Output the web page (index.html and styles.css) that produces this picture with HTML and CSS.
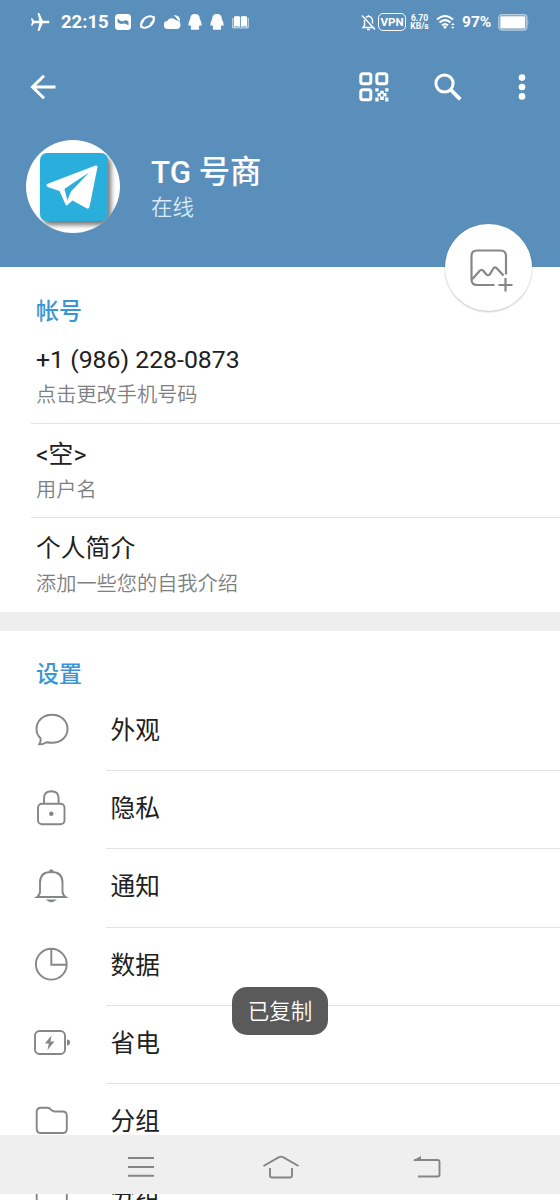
FILE: index.html
```html
<!DOCTYPE html>
<html lang="zh-CN">
  <head>
    <meta charset="UTF-8" />
    <meta name="viewport" content="width=device-width, initial-scale=1.0" />
    <title>TG 号商</title>
    <link rel="stylesheet" href="styles.css">
  </head>
  <body>
    <div class="screen">
      <header class="header">
        <div class="statusbar">
          <svg class="plane" width="20" height="20" viewBox="0 0 20 20"><path d="M19 8.8H12.8L9.3 1H7.6L9.4 8.8H4L2.3 6.3H1L2 10L1 13.7H2.3L4 11.2H9.4L7.6 19H9.3L12.8 11.2H19Q20 10 19 8.8Z" fill="#fff"/></svg>
          <span class="time">22:15</span>
          <div class="notices">
            <svg width="16" height="16" viewBox="0 0 16 16"><rect width="16" height="16" rx="3.5" fill="#fff"/><path d="M2.5 4.5Q6 8 8.5 7Q11 5.5 13.5 7.5V11.5Q10 8.5 7.5 9.8Q4.5 10.5 2.5 8Z" fill="#5a8fbb"/></svg>
            <svg width="17" height="16" viewBox="0 0 17 16"><ellipse cx="8.5" cy="8" rx="7.4" ry="4.6" transform="rotate(-38 8.5 8)" fill="none" stroke="#fff" stroke-width="2"/><path d="M2 14Q1.5 10.5 5 6.5M15 2Q15.5 6 11 10.500" fill="none" stroke="#fff" stroke-width="1.3"/></svg>
            <svg width="17" height="16" viewBox="0 0 17 16"><path d="M4 15A4 4 0 0 1 3.4 7A5 5 0 0 1 12 6.3A4.4 4.4 0 0 1 13 15Z" fill="#fff"/><path d="M9.5 1.5A5 5 0 0 1 15.8 8Q15 6 13.2 5.2Q12 2.5 9.5 1.5Z" fill="#fff"/></svg>
            <svg width="14" height="16" viewBox="0 0 14 16"><path d="M7 0Q2.2 0 2.2 5Q0 8.5 .3 11.5Q1.2 12 2 10.8Q2.5 12.3 3.3 13.2Q1.7 15.5 4 15.8H10Q12.3 15.5 10.7 13.2Q11.5 12.3 12 10.8Q12.8 12 13.7 11.5Q14 8.5 11.8 5Q11.8 0 7 0Z" fill="#fff"/></svg>
            <svg width="14" height="16" viewBox="0 0 14 16"><path d="M7 0Q2.2 0 2.2 5Q0 8.5 .3 11.5Q1.2 12 2 10.8Q2.5 12.3 3.3 13.2Q1.7 15.5 4 15.8H10Q12.3 15.5 10.7 13.2Q11.5 12.3 12 10.8Q12.8 12 13.7 11.5Q14 8.5 11.8 5Q11.8 0 7 0Z" fill="#fff"/></svg>
            <svg width="17" height="16" viewBox="0 0 17 16"><path d="M2 2.5Q6 1.2 8.1 2.8V13Q5 11.8 2 12.8ZM15 2.5Q11 1.2 8.9 2.8V13Q12 11.8 15 12.8Z" fill="#fff"/><path d="M.8 4V13.8H7.5L8.5 14.3L9.5 13.8H16.2V4" fill="none" stroke="#fff" stroke-width=".8"/></svg>
          </div>
          <div class="system">
            <svg class="mute" width="15" height="17" viewBox="0 0 15 17"><path d="M3.5 6V11.5L2 13.5H13.2M4.8 3.6Q7.5 1.2 10.2 3.5Q11.5 4.8 11.5 7V9.5M7.5 1V2.5M6 15.5H9M1 1.5L14 15.5" fill="none" stroke="#fff" stroke-width="1.4"/></svg>
            <span class="vpn">VPN</span>
            <span class="speed"><b>6.70</b><b>KB/s</b></span>
            <svg class="wifi" width="20" height="16" viewBox="0 0 20 16"><path d="M1 5.5Q9 -1.5 17 5.5M3.5 8.5Q9 3.7 14.5 8.5M6 11.3Q9 8.8 12 11.3" fill="none" stroke="#fff" stroke-width="2.1"/><path d="M6.8 12.8Q9 11.2 11.2 12.8L9 15Z" fill="#fff"/><path d="M15 11L16.8 9L18.6 11ZM15 12.7L16.8 14.7L18.6 12.7Z" fill="#fff"/></svg>
            <span class="percent">97%</span>
            <svg class="power" width="31" height="17" viewBox="0 0 31 17"><rect x=".8" y=".8" width="28" height="15.2" rx="3" fill="none" stroke="#b3cce0" stroke-width="1.4"/><rect x="2.3" y="2.3" width="25" height="12.2" rx="1" fill="#fff"/><path d="M29.5 5.5Q31.3 8.4 29.5 11.3Z" fill="#b3cce0"/></svg>
          </div>
        </div>

        <div class="toolbar">
          <svg width="26" height="26" viewBox="0 0 26 26"><path d="M14 1.8L2.5 13L14 24.2M2.5 13H25.5" fill="none" stroke="#fff" stroke-width="3"/></svg>
          <div class="actions">
            <svg width="30" height="30" viewBox="0 0 30 30"><g fill="none" stroke="#fff" stroke-width="3"><rect x="1.8" y="1.8" width="10" height="10" rx="2"/><rect x="17.8" y="1.8" width="10" height="10" rx="2"/><rect x="1.8" y="17.8" width="10" height="10" rx="2"/></g><path d="M16.3 16.3H19.6V19.6H16.3ZM26.2 16.3H29.4V19.6H26.2ZM21.2 18.8H24.8V22H21.2ZM18.5 21H21.8V24.5H18.5ZM24.2 21H27.5V24.5H24.2ZM16.3 25.5H19.6V29.4H16.3ZM21.2 24.5H24.8V28H21.2ZM26.2 25.5H29.4V29.4H26.2Z" fill="#fff"/></svg>
            <svg width="28" height="28" viewBox="0 0 28 28"><circle cx="10.5" cy="10.5" r="8.6" fill="none" stroke="#fff" stroke-width="3"/><path d="M16.5 16.5L26.3 26.3" stroke="#fff" stroke-width="3.8"/></svg>
            <svg class="more" width="8" height="26" viewBox="0 0 8 26"><g fill="#fff"><circle cx="4" cy="3.6" r="3.3"/><circle cx="4" cy="13" r="3.3"/><circle cx="4" cy="22.4" r="3.3"/></g></svg>
          </div>
        </div>

        <div class="profile">
          <div class="avatar">
            <div class="logo">
              <svg width="68" height="68" viewBox="0 0 68 68"><path d="M7 31Q5.5 32.5 7.5 34L19.5 38L25.5 51.5Q26.5 53.5 28 51.5L32.5 47.5L47 55.5Q49 56 49.5 54L57.5 14Q57.5 12 55.5 12.5Z" fill="#fff"/><path d="M22 37.5L49 19.5L31 38.5L27.8 46L26.5 49.5Z" fill="#2aaedb"/><path d="M20.5 37.5L24.5 36L27 46V51Z" fill="#fff"/></svg>
            </div>
          </div>
          <div class="who">
            <div class="name">TG 号商</div>
            <div class="online">在线</div>
          </div>
        </div>

        <div class="photoBtn">
          <svg width="46" height="46" viewBox="0 0 46 46"><path d="M27.5 39H10Q4.5 39 4.5 33.5V10Q4.5 4.5 10 4.5H33.5Q39 4.5 39 10V28.5M5.5 33L12.5 25Q14.5 22.5 16.5 25L19 28Q21 30.5 23 28L26 23Q28 20 30 22.5L36.5 29.5M38.5 32V45.5M31.5 39H45.5" fill="none" stroke="#84878a" stroke-width="2.2"/></svg>
        </div>
      </header>

      <section class="account">
        <h2>帐号</h2>
        <div class="info"><div class="value">+1 (986) 228-0873</div><div class="hint">点击更改手机号码</div></div>
        <div class="info"><div class="value">&lt;空&gt;</div><div class="hint">用户名</div></div>
        <div class="info"><div class="value">个人简介</div><div class="hint">添加一些您的自我介绍</div></div>
      </section>

      <section class="settings">
        <h2>设置</h2>
        <div class="item">
          <svg width="40" height="40" viewBox="0 0 40 40"><path d="M7.2 35.3Q9.5 31.5 8.3 29Q4.5 25.3 4.5 20C4.5 11.8 11.3 5.8 20 5.8C28.7 5.8 35.5 11.8 35.5 20C35.5 28.3 28.7 33.8 20 33.8Q17.5 33.8 14.5 33.3Q11 35.6 7.2 35.3Z"/></svg>
          <span>外观</span>
        </div>
        <div class="item">
          <svg width="40" height="40" viewBox="0 0 40 40"><rect x="6" y="16.8" width="26.5" height="20.5" rx="4"/><path d="M12 16.5V11.5Q12 4.2 19.3 4.2Q26.6 4.2 26.6 11.5V16.5"/><circle cx="19.3" cy="26.8" r="1.3" fill="#84878a"/></svg>
          <span>隐私</span>
        </div>
        <div class="item">
          <svg width="40" height="40" viewBox="0 0 40 40"><path d="M5 32H33.5Q30.5 30 30.5 26.500V17.500Q30.5 7 19.3 7Q8 7 8 17.500V26.500Q8 30 5 32Z"/><path d="M17.5 6.5Q19.3 4 21 6.5M16.7 35.5Q19.3 37.3 21.9 35.5Z"/></svg>
          <span>通知</span>
        </div>
        <div class="item">
          <svg width="40" height="40" viewBox="0 0 40 40"><circle cx="19.3" cy="20.2" r="15.4"/><path d="M19.3 4.8V20.7H34.5"/></svg>
          <span>数据</span>
        </div>
        <div class="item">
          <svg width="40" height="40" viewBox="0 0 40 40"><rect x="3" y="9" width="30" height="23" rx="4.5"/><path d="M19.5 13.5L12.8 21.5H16.8L15.5 28L22.5 19.5H18.5Z" fill="#84878a" stroke="none"/><path d="M35 17.5Q38 17.5 38 20.5T35 23.5Z" fill="#84878a" stroke="none"/></svg>
          <span>省电</span>
        </div>
        <div class="item">
          <svg width="40" height="40" viewBox="0 0 40 40"><path d="M9 7.7H15.5Q17.5 7.7 19 9.7Q20.5 11.500 22.5 11.500H30.5Q34.8 11.500 34.8 15.7V28.7Q34.8 33 30.5 33H9Q4.7 33 4.7 28.7V12Q4.7 7.7 9 7.7Z"/></svg>
          <span>分组</span>
        </div>
      </section>

      <div class="toast">已复制</div>

      <div class="bottom">
        <nav class="navbar">
          <svg width="28" height="24" viewBox="0 0 28 24"><path d="M1 3H27M1 12H27M1 20.7H27"/></svg>
          <svg class="home" width="38" height="26" viewBox="0 0 38 26"><path d="M1.5 12L17 3.2Q19 2 21 3.2L36.5 12M8 14V21.5Q8 23.5 10 23.5H28Q30 23.5 30 21.5V14"/></svg>
          <svg width="28" height="26" viewBox="0 0 28 26"><path d="M1 6H24.5Q26.5 6 26.5 8V20.5Q26.5 22.5 24.5 22.5H5"/><path d="M0 6.5L8 2V6.5Z" fill="#858585" stroke="none"/></svg>
        </nav>
        <div class="peek">
          <svg width="40" height="40" viewBox="0 0 40 40"><path d="M9 6.5H15.5Q17.5 6.5 19 8.5Q20.5 10.5 22.5 10.5H30.5Q34.8 10.5 34.8 14.8V28Q34.8 32.3 30.5 32.3H9Q4.7 32.3 4.7 28V10.8Q4.7 6.5 9 6.5Z"/></svg>
          <span>分组</span>
        </div>
      </div>
    </div>
  </body>
</html>
```
FILE: styles.css
```css
* {
  box-sizing: border-box;
}
body {
  margin: 0;
  background-color: white;
  font-family: Roboto, "Noto Sans CJK SC", sans-serif;
  color: #212121;
}
svg {
  display: block;
  flex-shrink: 0;
}
.screen {
  position: relative;
  width: 560px;
  height: 1200px;
  overflow: hidden;
}

/* header */
.header {
  position: relative;
  height: 267px;
  background-color: #5a8fbb;
  color: white;
}
.statusbar {
  display: flex;
  align-items: center;
  height: 44px;
  padding: 0 31px 0 30px;
}
.time {
  margin-left: 11px;
  width: 49px;
  font-size: 18.5px;
  line-height: 22px;
  font-weight: 700;
  white-space: nowrap;
}
.notices {
  display: flex;
  align-items: center;
  margin-left: 5px;
  gap: 7.8px;
}
.system {
  display: flex;
  align-items: center;
  margin-left: auto;
}
.mute {
  margin-right: -1px;
}
.vpn {
  width: 28px;
  height: 18px;
  margin-left: 3px;
  border: 1.5px solid white;
  border-radius: 5px;
  font-size: 11.5px;
  line-height: 17px;
  font-weight: 700;
  text-align: center;
}
.speed {
  width: 19px;
  margin-left: 4px;
  font-size: 8.5px;
  line-height: 8.5px;
  text-align: center;
}
.speed b {
  display: block;
}
.wifi {
  margin-left: 7px;
}
.percent {
  width: 29px;
  margin-left: 6px;
  font-size: 15.5px;
  font-weight: 700;
}
.power {
  margin-left: 7px;
}
.toolbar {
  display: flex;
  align-items: center;
  justify-content: space-between;
  height: 86px;
  padding: 0 34px 0 30px;
}
.actions {
  display: flex;
  align-items: center;
  gap: 45px;
}
.more {
  margin-left: 11px;
}
.profile {
  display: flex;
  align-items: center;
  padding: 10px 0 0 26px;
}
.avatar {
  display: flex;
  align-items: center;
  justify-content: center;
  width: 94px;
  height: 93px;
  padding-left: 2px;
  border-radius: 50%;
  background-color: white;
  overflow: hidden;
}
.logo {
  width: 68px;
  height: 68px;
  border-radius: 7px;
  background-color: #2aaedb;
  box-shadow: 3px 4px 5px #777;
}
.who {
  margin-left: 31px;
  padding-top: 5px;
}
.name {
  font-size: 31.3px;
  line-height: 38px;
  font-weight: 500;
}
.online {
  font-size: 21.5px;
  line-height: 32px;
  font-weight: 350;
  color: #d7eafa;
}
.photoBtn {
  position: absolute;
  right: 28px;
  bottom: -44px;
  display: flex;
  align-items: center;
  justify-content: center;
  width: 87px;
  height: 87px;
  padding: 2px 0 0 2px;
  border-radius: 50%;
  background-color: white;
  box-shadow: 0 1px 2px rgba(0, 0, 0, 0.25);
}

/* account and settings lists */
h2 {
  margin: 0;
  padding-left: 36px;
  font-size: 23px;
  line-height: 34px;
  font-weight: 500;
  color: #3a95d5;
}
.account {
  height: 345px;
  padding-top: 28px;
}
.info {
  height: 94.5px;
  margin-left: 31px;
  padding: 13px 0 0 5px;
  border-bottom: 1px solid #e3e3e3;
}
.info:last-child {
  border-bottom: none;
}
.value {
  font-size: 24.8px;
  line-height: 36px;
}
.hint {
  font-size: 20.2px;
  line-height: 35px;
  font-weight: 350;
  color: #7d8083;
}
.settings {
  border-top: 19px solid #eee;
  padding-top: 27px;
}
.settings h2 {
  margin-bottom: 1px;
}
.item {
  display: flex;
  height: 78.2px;
  padding-left: 32px;
}
.item svg,
.peek svg {
  margin-top: 16px;
  fill: none;
  stroke: #84878a;
  stroke-width: 1.9;
}
.item span,
.peek span {
  flex: 1;
  height: 100%;
  margin-left: 34px;
  padding-left: 4.5px;
  border-bottom: 1px solid #e3e3e3;
  font-size: 24.7px;
  line-height: 76px;
}

.toast {
  position: absolute;
  left: 232px;
  top: 987px;
  width: 96px;
  height: 48px;
  border-radius: 15px;
  background-color: #5a5a5a;
  color: white;
  font-size: 21.5px;
  line-height: 49px;
  font-weight: 350;
  text-align: center;
}

/* system navigation, with a sliver of the list under it */
.bottom {
  position: absolute;
  left: 0;
  bottom: 0;
  width: 100%;
  background-color: white;
}
.navbar {
  display: flex;
  align-items: center;
  justify-content: space-between;
  height: 59px;
  padding: 5px 119px 0 127px;
  background-color: #efefef;
}
.navbar svg {
  fill: none;
  stroke: #858585;
  stroke-width: 1.9;
}
.navbar .home {
  margin-right: 6px;
}
.peek {
  display: flex;
  align-items: center;
  height: 6px;
  padding-left: 32px;
  overflow: hidden;
}
.peek svg {
  margin-top: 0;
}
.peek span {
  height: auto;
  border-bottom: none;
}
```
